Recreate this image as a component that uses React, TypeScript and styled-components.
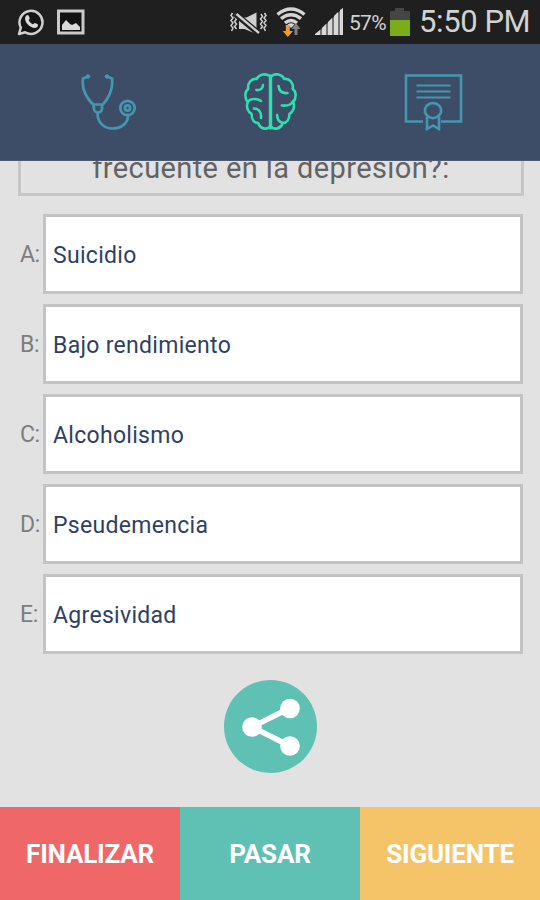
import React from "react";
import styled, { createGlobalStyle } from "styled-components";

const GlobalStyle = createGlobalStyle`
  * { box-sizing: border-box; }
  body { margin: 0; background: #e2e2e2; font-family: Roboto, "Liberation Sans", sans-serif; }
  svg { display: block; flex: none; }
`;

const Screen = styled.div`
  width: 540px;
  height: 900px;
  display: flex;
  flex-direction: column;
  overflow: hidden;
  background: #e2e2e2;
`;

const StatusBar = styled.div`
  height: 44px;
  flex: none;
  display: flex;
  align-items: center;
  justify-content: space-between;
  padding: 0 11px 0 17px;
  background: #1f1f1f;
  color: #d2d2d2;
`;

const StatusGroup = styled.div`
  display: flex;
  align-items: center;
`;

const LeftGroup = styled(StatusGroup)`
  gap: 11px;
`;

const SignalGroup = styled(StatusGroup)`
  gap: 8px;
`;

const Battery = styled.span`
  font-size: 21px;
  line-height: 44px;
  width: 37px;
  margin: 2px 3px 0 5px;
  letter-spacing: -0.7px;
  white-space: nowrap;
`;

const Clock = styled.span`
  font-size: 31px;
  line-height: 44px;
  width: 110px;
  margin-left: 8px;
  letter-spacing: -0.4px;
  white-space: nowrap;
`;

const TabBar = styled.nav`
  height: 117px;
  flex: none;
  display: grid;
  grid-template-columns: 216px 108px 216px;
  align-items: center;
  justify-items: center;
  background: #3e4d67;
  border-bottom: 1px solid #4d5a73;
`;

const Tab = styled.button<{ $active?: boolean }>`
  border: 0;
  padding: 0 0 0 1px;
  background: none;
  color: ${(p) => (p.$active ? "#2ce0b0" : "#4497b0")};
`;

const Content = styled.main`
  flex: 1;
  min-height: 0;
  overflow: hidden;
  display: flex;
  flex-direction: column;
  justify-content: flex-end;
  padding: 0 17px 34px 18px;
`;

const Question = styled.div`
  flex: none;
  height: 86px;
  margin-right: -1px;
  border: 3px solid #c6c6c6;
  display: flex;
  align-items: flex-end;
  justify-content: center;
  padding-bottom: 6px;
  font-size: 29px;
  line-height: 38px;
  color: #636363;
  letter-spacing: 0.4px;
  white-space: nowrap;
`;

const Options = styled.div`
  flex: none;
  display: grid;
  gap: 10px;
  margin-top: 18px;
`;

const OptionRow = styled.div`
  display: grid;
  grid-template-columns: 25px 1fr;
  align-items: center;
`;

const Letter = styled.span`
  padding: 1px 0 0 2px;
  font-size: 23px;
  letter-spacing: -0.4px;
  color: #7d7d7d;
`;

const Answer = styled.button`
  height: 80px;
  border: 3px solid #c3c3c3;
  background: #fff;
  padding: 2px 0 0 7px;
  text-align: left;
  font-family: inherit;
  font-size: 23px;
  letter-spacing: 0.3px;
  color: #2f3f63;
`;

const ShareButton = styled.button`
  flex: none;
  align-self: center;
  margin: 26px 1px 0 0;
  width: 93px;
  height: 93px;
  padding: 0;
  border: 0;
  border-radius: 50%;
  background: #5ec1b4;
`;

const Footer = styled.footer`
  height: 93px;
  flex: none;
  display: grid;
  grid-template-columns: repeat(3, 180px);
`;

const Action = styled.button<{ $color: string }>`
  border: 0;
  padding: 1px 0 0;
  background: ${(p) => p.$color};
  color: #fff;
  font-family: inherit;
  font-size: 26px;
  font-weight: 700;
  letter-spacing: -0.2px;
`;

const WhatsAppIcon = () => (
  <svg width="28" height="28" viewBox="0 0 28 28">
    <path d="M2 26l1.800-6.300A11.500 11.500 0 1 1 8.200 24.300Z" fill="#141414" stroke="#cfcfcf" strokeWidth="2.500" strokeLinejoin="round" />
    <path d="M9.300 7.500c1-1 2-.7 2.400.2l1 2.400c.3.800-.9 1.600-.9 2.200.7 1.700 2.200 3.100 4 3.900.7.100 1.500-1.600 2.300-1.200l2.500 1.200c.8.400.5 2-.3 2.700-2.400 2.300-6.400.5-8.700-1.600-2.600-2.300-5.100-6.900-2.300-9.800Z" fill="#d8d8d8" />
  </svg>
);

const PictureIcon = () => (
  <svg width="31" height="28" viewBox="0 0 31 28">
    <rect x="2.500" y="3" width="24.500" height="22" fill="#111" stroke="#cacaca" strokeWidth="3" />
    <path d="M6 22v-5l4-5 4 4 2 1 4-2 4 4v3Z" fill="#d8d8d8" />
  </svg>
);

const MutedIcon = () => (
  <svg width="37" height="28" viewBox="0 0 37 28" fill="none" stroke="#d0d0d0">
    <path d="M2.500 5l-1.500 2.500 2 2.500-2 2.500 2 2.500-2 2.500 2 2.500-1.500 3M6 6l-1.500 2.500 2 2.500-2 2.500 2 2.500-2 2.500 2 2.500M34.500 5l1.500 2.500-2 2.500 2 2.500-2 2.500 2 2.500-2 2.500 1.500 3M31 6l1.500 2.500-2 2.500 2 2.500-2 2.500 2 2.500-2 2.500" strokeWidth="1.500" />
    <path d="M9 9.500V21h5.500l12 5V4.500l-10 5Z" fill="#d0d0d0" stroke="none" />
    <path d="M5.500 6l24 20" stroke="#1f1f1f" strokeWidth="6" />
    <path d="M6.500 6l22.500 19" strokeWidth="2.300" />
  </svg>
);

const WifiIcon = () => (
  <svg width="32" height="32" viewBox="0 0 32 32" fill="none">
    <g stroke="#d4d4d4" strokeWidth="3.400">
      <path d="M2.500 8.500Q16-2.500 29.500 8.500" />
      <path d="M6 12.700Q16 5 26 12.700" />
      <path d="M10 17Q16 12 22 17" />
    </g>
    <path d="M12.500 18.500Q16 16 19.500 18.500L16 22Z" fill="#d4d4d4" />
    <path d="M10.800 19h4v6h3.200L12.800 31l-5-6h3Z" fill="#ee9d25" />
    <path d="M19.500 29v-6h-3l4.500-6 4.500 6h-3v6Z" fill="#828282" />
  </svg>
);

const SignalIcon = () => (
  <svg width="29" height="28" viewBox="0 0 29 28">
    <path d="M0 27L28 0V27Z" fill="#777" />
    <path d="M0 27v-1l5-4v5ZM7 27v-7l4-4v11ZM13 27V14l4-4v17ZM19 27V8l4-4v23ZM25 27V2l3-2v27Z" fill="#d8d8d8" />
  </svg>
);

const BatteryIcon = () => (
  <svg width="22" height="30" viewBox="0 0 22 30">
    <path d="M1 4h5V1h9v3h6v9H1Z" fill="#454545" />
    <path d="M1 13h20v16H1Z" fill="#7aad18" />
  </svg>
);

const StethoscopeIcon = () => (
  <svg width="58" height="60" viewBox="0 0 58 60" fill="none" stroke="currentColor" strokeWidth="2.700" strokeLinecap="round">
    <path d="M8 4.500 3 6.500c-1.500 11 4 20 10 26M27 4.500l5 2c1.500 11-4 20-9 26" />
    <circle cx="8" cy="4.500" r="1.800" fill="currentColor" strokeWidth="1" />
    <circle cx="27" cy="4.500" r="1.800" fill="currentColor" strokeWidth="1" />
    <path d="M13.500 32.500h8.500v4a4 4 0 0 1-8 0ZM17.500 41c0 9 6 15.500 15 15.500S48 51 48 44" />
    <circle cx="47.500" cy="36" r="7.200" />
    <circle cx="47.500" cy="36" r="2.600" />
  </svg>
);

const BrainIcon = () => (
  <svg width="53" height="60" viewBox="0 0 56 60" preserveAspectRatio="none" fill="none" stroke="currentColor" strokeWidth="2.700" strokeLinecap="round" strokeLinejoin="round">
    <path d="M28 4v52" strokeWidth="3.600" />
    <path d="M27 4C23 1 16 2 13.500 7 8 6 3.500 11 4.500 17 0 20 1 27 4 30c-2 5 0 10 4 12 0 6 3 9 7 9 2 6 9 7 12 4" />
    <path d="M29 4c4-3 11-2 13.500 3C48 6 52.500 11 51.500 17c4.500 3 3.500 10 .5 13 2 5 0 10-4 12 0 6-3 9-7 9-2 6-9 7-12 4" />
    <path d="M13 18c4 .5 7-1.500 7-5M4 29.500c3-3 10-3.500 14-.5M10.500 36.500c5 0 8 3.500 7.500 9.500M36.500 14c.5 5 4 7.500 9.500 7M52 29c-2 4-7 5-12 4.500M35 43c0 5 2 7 6 8" />
  </svg>
);

const DiplomaIcon = () => (
  <svg width="60" height="60" viewBox="0 0 60 60" fill="none" stroke="currentColor" strokeWidth="2.600">
    <path d="M20 49.500H3V3.500h55v46H38" />
    <path d="M13.500 13.500h34M13.500 19.500h34M13.500 25.500h34" strokeWidth="2.200" />
    <path d="M24 45v12l6-3.500 6 3.500V45" />
    <path d="M30 31l3.500.8 3 2L38 37v3.400l-1.800 3-3 2-3.200.8-3.300-.8-3-2-1.700-3V37l1.500-3.200 3-2Z" fill="#3e4d67" />
  </svg>
);

const ShareIcon = () => (
  <svg width="93" height="93" viewBox="0 0 93 93">
    <path d="M66 28 28 47l38 19" fill="none" stroke="#fff" strokeWidth="5.500" />
    <circle cx="28" cy="47" r="9.800" fill="#fff" />
    <circle cx="66" cy="28.500" r="9.800" fill="#fff" />
    <circle cx="66" cy="66" r="9.800" fill="#fff" />
  </svg>
);

const answers = [
  ["A", "Suicidio"],
  ["B", "Bajo rendimiento"],
  ["C", "Alcoholismo"],
  ["D", "Pseudemencia"],
  ["E", "Agresividad"],
];

export default function App() {
  return (
    <Screen>
      <GlobalStyle />
      <StatusBar>
        <LeftGroup>
          <WhatsAppIcon />
          <PictureIcon />
        </LeftGroup>
        <StatusGroup>
          <SignalGroup>
            <MutedIcon />
            <WifiIcon />
            <SignalIcon />
          </SignalGroup>
          <Battery>57%</Battery>
          <BatteryIcon />
          <Clock>5:50 PM</Clock>
        </StatusGroup>
      </StatusBar>
      <TabBar>
        <Tab aria-label="Casos"><StethoscopeIcon /></Tab>
        <Tab $active aria-label="Preguntas"><BrainIcon /></Tab>
        <Tab aria-label="Diplomas"><DiplomaIcon /></Tab>
      </TabBar>
      <Content>
        <Question>frecuente en la depresión?:</Question>
        <Options>
          {answers.map(([letter, text]) => (
            <OptionRow key={letter}>
              <Letter>{letter}:</Letter>
              <Answer>{text}</Answer>
            </OptionRow>
          ))}
        </Options>
        <ShareButton aria-label="Compartir"><ShareIcon /></ShareButton>
      </Content>
      <Footer>
        <Action $color="#f06768">FINALIZAR</Action>
        <Action $color="#5ec1b4">PASAR</Action>
        <Action $color="#f5c469">SIGUIENTE</Action>
      </Footer>
    </Screen>
  );
}
